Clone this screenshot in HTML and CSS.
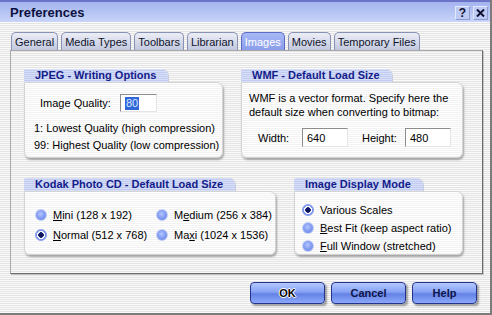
FILE: index.html
```html
<!DOCTYPE html>
<html lang="en">
<head>
    <meta charset="UTF-8">
    <title>Preferences</title>
    <link rel="stylesheet" href="styles.css">
</head>
<body>

<div class="window">
    <div class="titlebar">
        <span class="title">Preferences</span>
        <div class="title-btns">
            <span class="tbtn">?</span>
            <span class="tbtn">
                <svg width="9" height="8" viewBox="0 0 9 8"><path d="M1 0.5 L8 7.5 M8 0.5 L1 7.5" stroke="#101030" stroke-width="2"/></svg>
            </span>
        </div>
    </div>

    <div class="client">
        <div class="tabs">
            <span class="tab">General</span>
            <span class="tab">Media Types</span>
            <span class="tab">Toolbars</span>
            <span class="tab">Librarian</span>
            <span class="tab active">Images</span>
            <span class="tab">Movies</span>
            <span class="tab">Temporary Files</span>
        </div>

        <div class="panel">
            <div class="row row-top">
                <section class="group">
                    <div class="group-title">JPEG - Writing Options</div>
                    <div class="group-box jpeg-box">
                        <div class="quality">
                            <span>Image Quality:</span>
                            <span class="field q-field"><span class="sel">80</span></span>
                        </div>
                        <div class="note">1: Lowest Quality (high compression)</div>
                        <div class="note">99: Highest Quality (low compression)</div>
                    </div>
                </section>

                <section class="group">
                    <div class="group-title">WMF - Default Load Size</div>
                    <div class="group-box wmf-box">
                        <p class="wmf-text">WMF is a vector format. Specify here the default size when converting to bitmap:</p>
                        <div class="size-row">
                            <span class="lbl-w">Width:</span>
                            <span class="field w-field">640</span>
                            <span class="lbl-h">Height:</span>
                            <span class="field w-field">480</span>
                        </div>
                    </div>
                </section>
            </div>

            <div class="row row-bottom">
                <section class="group">
                    <div class="group-title">Kodak Photo CD - Default Load Size</div>
                    <div class="group-box kodak-box">
                        <div class="radio"><span class="dot"></span><span><u>M</u>ini (128 x 192)</span></div>
                        <div class="radio"><span class="dot"></span><span>M<u>e</u>dium (256 x 384)</span></div>
                        <div class="radio"><span class="dot on"></span><span><u>N</u>ormal (512 x 768)</span></div>
                        <div class="radio"><span class="dot"></span><span>Ma<u>x</u>i (1024 x 1536)</span></div>
                    </div>
                </section>

                <section class="group">
                    <div class="group-title">Image Display Mode</div>
                    <div class="group-box mode-box">
                        <div class="radio"><span class="dot on"></span><span>Various Scales</span></div>
                        <div class="radio"><span class="dot"></span><span><u>B</u>est Fit (keep aspect ratio)</span></div>
                        <div class="radio"><span class="dot"></span><span><u>F</u>ull Window (stretched)</span></div>
                    </div>
                </section>
            </div>
        </div>

        <div class="buttons">
            <span class="btn ok">OK</span>
            <span class="btn">Cancel</span>
            <span class="btn help">Help</span>
        </div>
    </div>
</div>

</body>
</html>
```

FILE: styles.css
```css
body {
    margin: 0;
    font-family: "Liberation Sans", Arial, sans-serif;
    font-size: 11px;
    color: #000;
}
.window {
    width: 492px;
    height: 315px;
    box-sizing: border-box;
    border-right: 2px solid #7c7c7c;
    border-bottom: 2px solid #7c7c7c;
    background: repeating-linear-gradient(to bottom, #fafafa 0 1px, #e4e4e4 1px 2px);
    overflow: hidden;
}
.titlebar {
    height: 22px;
    box-sizing: border-box;
    border-top: 2px solid #6c74c8;
    background: linear-gradient(#a4b4ee, #c8d4f8);
    display: flex;
    align-items: center;
    justify-content: space-between;
    padding: 0 2px 0 10px;
}
.title {
    font-weight: bold;
    font-size: 13px;
    color: #0c1240;
}
.title-btns {
    display: flex;
    gap: 3px;
    margin-top: 2px;
}
.tbtn {
    width: 15px;
    height: 14px;
    box-sizing: border-box;
    border: 1px solid #e4eafc;
    border-right-color: #8e9cd0;
    border-bottom-color: #8e9cd0;
    background: #bccaf4;
    display: flex;
    align-items: center;
    justify-content: center;
    font-weight: bold;
    font-size: 12px;
    color: #101030;
}
.client {
    padding: 10px 7px 0 10px;
}
.tabs {
    display: flex;
    gap: 3px;
    margin-left: 1px;
    height: 18px;
}
.tab {
    height: 18px;
    box-sizing: border-box;
    padding: 2px 3px 0;
    border: 1px solid #8a92b4;
    border-bottom: none;
    border-radius: 5px 5px 0 0;
    background: linear-gradient(#eceef6, #c2c8de);
    font-size: 11px;
    line-height: 15px;
    color: #10142c;
}
.tab.active {
    background: linear-gradient(#a8b8f6, #8c9eea);
    border-color: #5c6cc4;
    color: #fff;
}
.panel {
    height: 224px;
    box-sizing: border-box;
    border: 1px solid #a8a8a8;
    border-right-color: #6c6c6c;
    border-bottom-color: #6c6c6c;
    box-shadow: 1px 1px 0 #c4c4c4;
    padding: 18px 0 0 13px;
}
.row {
    display: grid;
    column-gap: 18px;
}
.row-top {
    grid-template-columns: 199px 222px;
    margin-bottom: 20px;
}
.row-bottom {
    grid-template-columns: 252px 169px;
}
.group-title {
    display: inline-block;
    height: 13px;
    padding: 0 12px 0 11px;
    border-radius: 2px 7px 0 0;
    background: repeating-linear-gradient(to bottom, #d6def8 0 1px, #c2ccf0 1px 2px);
    box-shadow: 1px 0 0 #c8cce0;
    font-weight: bold;
    font-size: 11px;
    line-height: 13px;
    color: #13208a;
}
.group-box {
    box-sizing: border-box;
    border: 1px solid #d4d4d4;
    border-radius: 0 6px 6px 6px;
    background: repeating-linear-gradient(to bottom, #ffffff 0 1px, #f2f2f2 1px 2px);
    box-shadow: 1px 2px 2px #a4a4a4;
}
.jpeg-box {
    height: 76px;
    padding: 11px 0 0 9px;
}
.quality {
    display: flex;
    align-items: center;
    gap: 9px;
    margin-left: 6px;
    margin-bottom: 8px;
}
.field {
    display: inline-flex;
    align-items: center;
    box-sizing: border-box;
    background: #fff;
    border: 1px solid #e4e4e4;
    border-top-color: #8c8c8c;
    border-left-color: #8c8c8c;
    padding-left: 4px;
}
.q-field {
    width: 37px;
    height: 18px;
}
.sel {
    background: #3068d8;
    color: #dce6ff;
    padding: 0 1px;
    line-height: 13px;
}
.note {
    line-height: 17px;
}
.wmf-box {
    height: 76px;
    padding: 8px 0 0 7px;
}
.wmf-text {
    margin: 0;
    line-height: 14px;
    width: 210px;
}
.size-row {
    display: flex;
    align-items: center;
    margin-top: 9px;
    margin-left: 9px;
}
.w-field {
    width: 46px;
    height: 19px;
}
.lbl-w {
    width: 44px;
}
.lbl-h {
    margin-left: 14px;
    width: 43px;
}
.kodak-box {
    height: 64px;
    padding: 15px 0 0 10px;
    display: grid;
    grid-template-columns: 121px auto;
    row-gap: 4px;
    align-content: start;
}
.mode-box {
    height: 64px;
    padding: 10px 0 0 7px;
    display: flex;
    flex-direction: column;
    gap: 2px;
}
.radio {
    display: flex;
    align-items: center;
    gap: 6px;
    height: 16px;
}
.dot {
    width: 12px;
    height: 12px;
    box-sizing: border-box;
    border-radius: 50%;
    border: 1px solid #c4d0f4;
    background: radial-gradient(circle at 45% 40%, #b4c6ff 0, #7e98f0 55%, #6a86e8 100%);
}
.dot.on {
    border-color: #8aa0ec;
    background: radial-gradient(circle, #0c1660 0 2.5px, #ffffff 3px 3.8px, #7a94ee 4.3px);
}
.buttons {
    display: flex;
    justify-content: flex-end;
    gap: 6px;
    margin-top: 8px;
    padding-right: 6px;
}
.btn {
    width: 75px;
    height: 22px;
    box-sizing: border-box;
    border: 1px solid #24348c;
    border-radius: 4px;
    background: linear-gradient(#b4c8ff 0, #86a2f4 45%, #6482e6 55%, #8ca8fa 100%);
    box-shadow: 2px 2px 2px rgba(0, 0, 0, 0.35);
    display: flex;
    align-items: center;
    justify-content: center;
    font-weight: bold;
    font-size: 11px;
    color: #0c1448;
}
.btn.help {
    width: 65px;
}
.btn.ok {
    color: #000;
    text-shadow: 1px 0 0 #fff, -1px 0 0 #fff, 0 1px 0 #fff, 0 -1px 0 #fff;
}
```
